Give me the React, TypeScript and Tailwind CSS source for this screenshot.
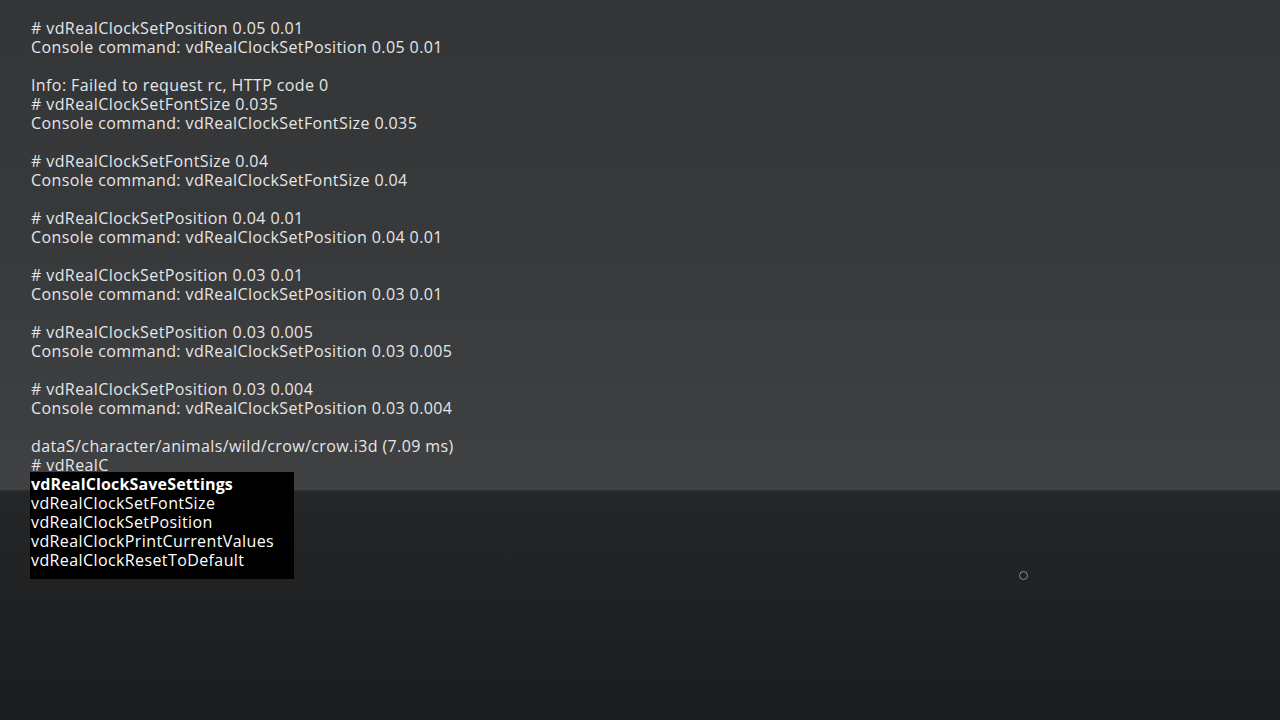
import React from "react";

const lines: string[] = [
  "# vdRealClockSetPosition 0.05 0.01",
  "Console command: vdRealClockSetPosition 0.05 0.01",
  "",
  "Info: Failed to request rc, HTTP code 0",
  "# vdRealClockSetFontSize 0.035",
  "Console command: vdRealClockSetFontSize 0.035",
  "",
  "# vdRealClockSetFontSize 0.04",
  "Console command: vdRealClockSetFontSize 0.04",
  "",
  "# vdRealClockSetPosition 0.04 0.01",
  "Console command: vdRealClockSetPosition 0.04 0.01",
  "",
  "# vdRealClockSetPosition 0.03 0.01",
  "Console command: vdRealClockSetPosition 0.03 0.01",
  "",
  "# vdRealClockSetPosition 0.03 0.005",
  "Console command: vdRealClockSetPosition 0.03 0.005",
  "",
  "# vdRealClockSetPosition 0.03 0.004",
  "Console command: vdRealClockSetPosition 0.03 0.004",
  "",
  "dataS/character/animals/wild/crow/crow.i3d (7.09 ms)",
  "# vdRealC",
];

const suggestions = [
  "vdRealClockSaveSettings",
  "vdRealClockSetFontSize",
  "vdRealClockSetPosition",
  "vdRealClockPrintCurrentValues",
  "vdRealClockResetToDefault",
];

export default function App() {
  return (
    <div className="relative w-[1280px] h-[720px] overflow-hidden font-['Open_Sans','Liberation_Sans',sans-serif]">
      {/* scene */}
      <div className="flex flex-col h-full">
        <div className="h-[490px] bg-gradient-to-b from-[#333537] via-[#37393b] to-[#404143]" />
        <div className="h-[2px] bg-[#2c2d2e]" />
        <div className="flex-1 bg-gradient-to-b from-[#252627] to-[#1b1c1d]" />
      </div>

      {/* cursor */}
      <div className="absolute left-[1019px] top-[571px] w-[9px] h-[9px] rounded-full border border-[#8a8b8c]" />

      {/* console */}
      <div className="absolute left-[31px] top-[19px] text-[16px] leading-[19px] tracking-[0.4px] text-[#e6e6e6]">
        {lines.map((l, i) => (
          <div key={i} className="h-[19px] whitespace-pre">{l}</div>
        ))}
        <div className="-ml-[1px] mt-[-3px] w-[264px] bg-black pt-[3px] pb-[9px] pl-[1px] text-white">
          {suggestions.map((s, i) => (
            <div key={s} className={i === 0 ? "h-[19px] font-bold tracking-[0.15px]" : "h-[19px]"}>{s}</div>
          ))}
        </div>
      </div>
    </div>
  );
}
